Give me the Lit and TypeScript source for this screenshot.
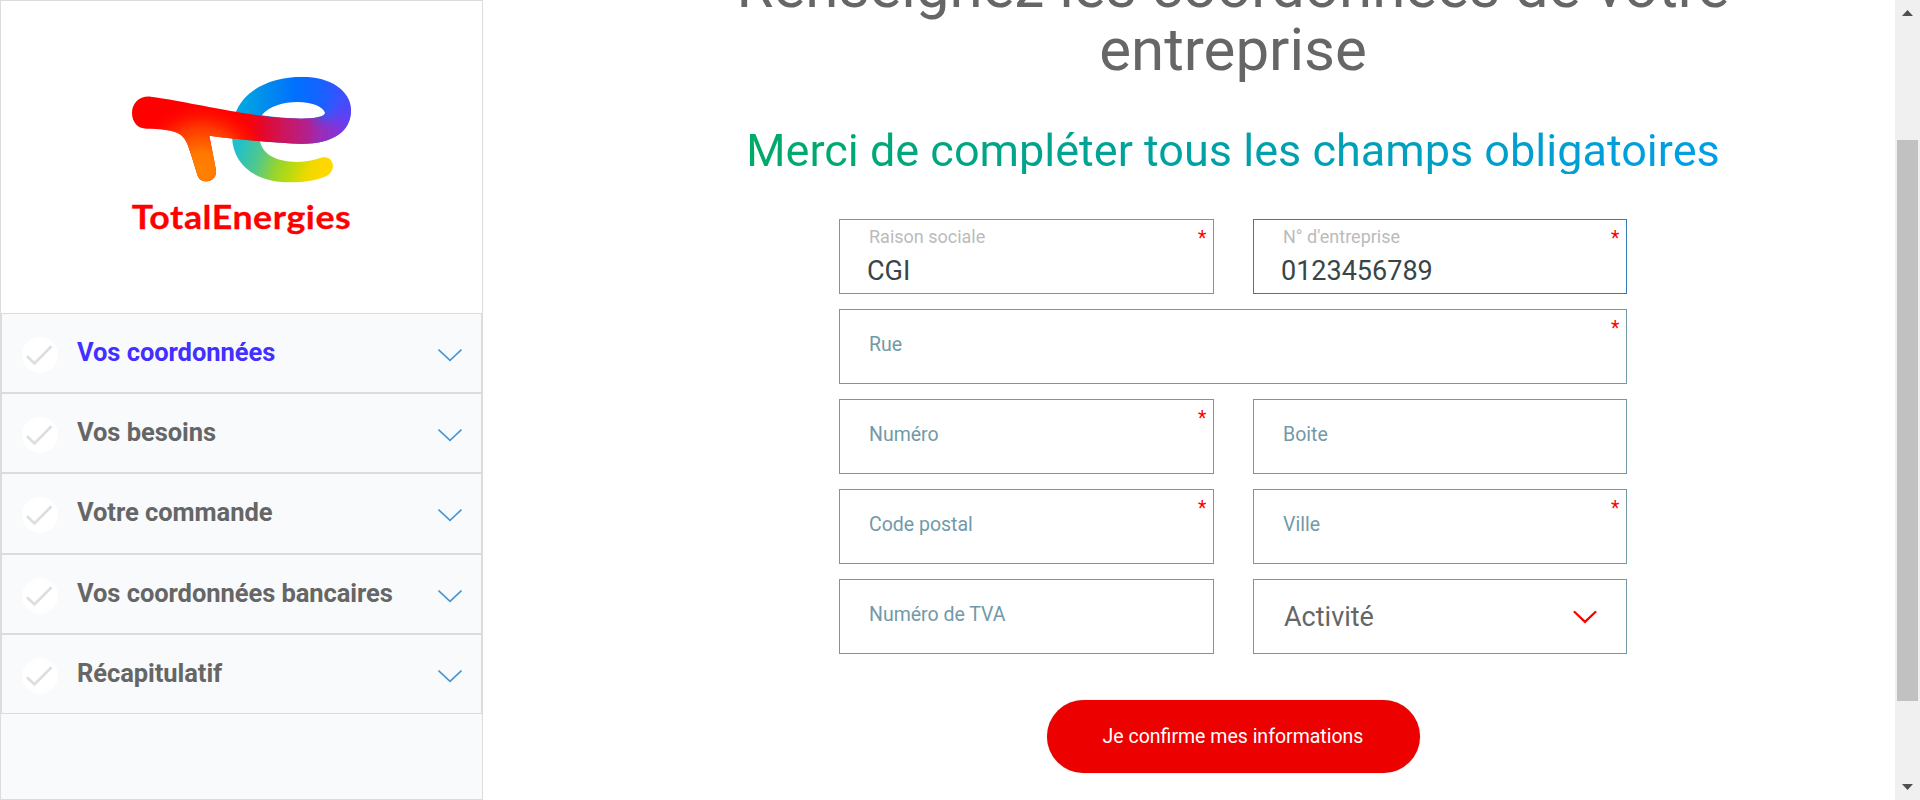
import { LitElement, html, css, svg } from "lit";
import { customElement, property } from "lit/decorators.js";
import { classMap } from "lit/directives/class-map.js";

@customElement("brand-logo")
class BrandLogo extends LitElement {
  static styles = css`
    :host { display: block; width: 260px; height: 190px; }
    svg { display: block; width: 260px; height: 190px; }
    text { font-family: Lato, "Open Sans", sans-serif; font-weight: 700; }
  `;
  render() {
    return svg`<svg viewBox="0 0 780 570">
      <defs>
        <linearGradient id="top" gradientUnits="userSpaceOnUse" x1="378" y1="0" x2="722" y2="0">
          <stop offset="0" stop-color="#00ace0"/><stop offset=".3" stop-color="#0088f0"/>
          <stop offset=".52" stop-color="#0070ff"/><stop offset=".72" stop-color="#1464ff"/>
          <stop offset="1" stop-color="#484cff"/>
        </linearGradient>
        <linearGradient id="bar" gradientUnits="userSpaceOnUse" x1="66" y1="0" x2="722" y2="0">
          <stop offset="0" stop-color="#f00"/><stop offset=".52" stop-color="#f00"/>
          <stop offset=".6" stop-color="#e4082c"/><stop offset=".7" stop-color="#cb1660"/>
          <stop offset=".8" stop-color="#b3208c"/><stop offset=".88" stop-color="#9a2bb4" stop-opacity="0"/>
        </linearGradient>
        <linearGradient id="low" gradientUnits="userSpaceOnUse" x1="385" y1="245" x2="640" y2="330">
          <stop offset="0" stop-color="#1fbfce"/><stop offset=".27" stop-color="#50c88c"/>
          <stop offset=".5" stop-color="#98d52c"/><stop offset=".66" stop-color="#bada10"/>
          <stop offset=".83" stop-color="#ecd900"/><stop offset="1" stop-color="#ffd800"/>
        </linearGradient>
        <radialGradient id="glow" gradientUnits="userSpaceOnUse" cx="275" cy="335" r="205">
          <stop offset="0" stop-color="#ff8200"/><stop offset=".28" stop-color="#ff7800"/>
          <stop offset=".65" stop-color="#ff4200" stop-opacity=".85"/><stop offset="1" stop-color="#ff1000" stop-opacity="0"/>
        </radialGradient>
        <filter id="soft" x="-50%" y="-50%" width="200%" height="200%"><feGaussianBlur stdDeviation="20"/></filter>
        <clipPath id="loop"><path clip-rule="evenodd" d="M376 160C402 91 480 50 578 50C662 50 722 93 723 148C724 213 671 252 572 251C520 249 480 246 440 242L376 200ZM455 166C478 138 520 126 562 126C610 126 640 142 645 158C646 170 616 176 574 176C530 175 490 171 455 166Z"/></clipPath>
      </defs>
      <path fill="url(#low)" d="M366 232C370 315 435 367 540 367C590 367 630 358 651 347C681 329 670 286 638 292C615 299 592 306 562 306C495 305 455 282 449 238Z"/>
      <g clip-path="url(#loop)">
        <rect x="360" y="40" width="380" height="230" fill="url(#top)"/>
        <g filter="url(#soft)">
          <ellipse cx="715" cy="165" rx="40" ry="40" fill="#5345f6"/>
          <ellipse cx="680" cy="220" rx="50" ry="45" fill="#7a35e0"/>
          <ellipse cx="625" cy="225" rx="48" ry="50" fill="#9c2bb8"/>
          <ellipse cx="560" cy="215" rx="50" ry="48" fill="#b8208a"/>
        </g>
      </g>
      <path fill="url(#bar)" d="M122 110C186 117 300 143 378 155C450 168 500 175 574 176C600 176 620 174 640 167L650 244Q615 252 572 251C475 248 382 238 298 227L318 331C322 367 271 377 262 344C250 305 241 275 232 252C220 218 192 207 110 206C81 206 66 184 66 159C66 130 88 107 122 110Z"/>
      <path fill="url(#glow)" d="M122 110C186 117 300 143 378 155C450 168 500 175 574 176L572 251C475 248 382 238 298 227L318 331C322 367 271 377 262 344C250 305 241 275 232 252C220 218 192 207 110 206C81 206 66 184 66 159C66 130 88 107 122 110Z"/>
      <text x="65" y="507" font-size="97" letter-spacing="1.5" textLength="659" lengthAdjust="spacingAndGlyphs" fill="#f00" stroke="#f00" stroke-width=".8" stroke-linejoin="round">TotalEnergies</text>
    </svg>`;
  }
}

@customElement("step-item")
class StepItem extends LitElement {
  @property() label = "";
  @property({ type: Boolean }) active = false;
  static styles = css`
    :host { display: block; }
    .row {
      box-sizing: border-box; height: 80.2px; border: 1px solid #dcdcdc;
      display: flex; align-items: center; padding: 4px 19px 0 20px;
    }
    .check { width: 36px; height: 36px; flex: none; }
    .name { flex: 1; margin: -6px 0 0 19px; font-size: 25.5px; font-weight: 700; letter-spacing: -0.06px; line-height: 30px; color: #666; white-space: nowrap; }
    .on { color: #432fff; }
    .arrow { width: 24px; height: 14px; flex: none; }
  `;
  render() {
    return html`<div class="row">
      <svg class="check" viewBox="0 0 36 36"><circle cx="18" cy="18" r="18" fill="#fff"/><path d="M5 19.2L12.5 26.4L29.5 9.3" fill="none" stroke="#dedede" stroke-width="2.8"/></svg>
      <span class=${classMap({ name: true, on: this.active })}>${this.label}</span>
      <svg class="arrow" viewBox="0 0 24 14"><path d="M.5 1.5L12 12.3L23.5 1.5" fill="none" stroke="#4796d2" stroke-width="1.6"/></svg>
    </div>`;
  }
}

@customElement("form-field")
class FormField extends LitElement {
  @property() label = "";
  @property() value = "";
  @property({ type: Boolean }) required = false;
  @property({ type: Boolean }) focused = false;
  @property({ type: Boolean }) select = false;
  static styles = css`
    :host { display: block; }
    .box {
      box-sizing: border-box; height: 75px; border: 1px solid #7398a6; background: #fff;
      position: relative; padding: 0 29px 0 29px; color: #7299a8;
    }
    .focus { border-color: #337ab7; }
    .label { display: block; font-size: 19.5px; line-height: 24px; padding-top: 23px; }
    .small { font-size: 18px; line-height: 22px; padding-top: 6px; color: #bbb; }
    .value { display: block; font-size: 27px; line-height: 32px; margin: 7px 0 0 -2px; color: #374649; }
    .star { position: absolute; top: 7px; right: 6.5px; font-size: 19.5px; line-height: 24px; color: #f00; }
    .choice { display: flex; align-items: center; justify-content: space-between; height: 73px; font-size: 27px; color: #666; padding-left: 1px; }
    .arrow { width: 24px; height: 14px; }
  `;
  render() {
    const box = classMap({ box: true, focus: this.focused });
    if (this.select) {
      return html`<div class=${box}><div class="choice"><span>${this.label}</span>
        <svg class="arrow" viewBox="0 0 24 14"><path d="M1.6 2L12 11.8L22.4 2" fill="none" stroke="#f00" stroke-width="2.3" stroke-linecap="round"/></svg></div></div>`;
    }
    return html`<div class=${box}>
      <span class=${classMap({ label: true, small: !!this.value })}>${this.label}</span>
      ${this.value ? html`<span class="value">${this.value}</span>` : ""}
      ${this.required ? html`<span class="star">*</span>` : ""}
    </div>`;
  }
}

@customElement("app-root")
class AppRoot extends LitElement {
  static styles = css`
    :host { display: flex; width: 1920px; height: 800px; overflow: hidden; background: #fff; font-family: Roboto, "Liberation Sans", sans-serif; }
    .side { box-sizing: border-box; width: 483px; height: 800px; border: 1px solid #dcdcdc; background: #f8fafc; flex: none; }
    .brand { box-sizing: border-box; height: 312px; background: #fff; padding: 59px 0 0 109px; }
    .main { flex: 1; padding-left: 88px; display: flex; flex-direction: column; align-items: center; }
    h1 { margin: -45px 0 0; width: 1100px; font-size: 60px; line-height: 63px; font-weight: 400; color: #666; text-align: center; flex: none; }
    h2 { margin: 48px 0 0; padding-bottom: 1px; font-size: 45px; line-height: 44px; font-weight: 400; flex: none; white-space: nowrap;
      background: linear-gradient(100deg, #00aa66, #00a0a8 50%, #009ee8); -webkit-background-clip: text; background-clip: text; color: transparent; }
    .form { margin-top: 45px; width: 788px; display: grid; grid-template-columns: 375px 374px; gap: 15px 39px; }
    .wide { grid-column: 1 / 3; }
    .confirm { margin-top: 46px; width: 373px; height: 73px; border: 0; border-radius: 37px; background: #ed0000; color: #fff; font: 400 19.5px Roboto, sans-serif; padding: 0; flex: none; box-shadow: 0 0 1px rgba(0,0,0,.4); }
    .scroll { width: 25px; height: 800px; background: #f0f0f0; flex: none; display: flex; flex-direction: column; align-items: center; }
    .up { width: 11px; height: 6px; margin-top: 10px; background: #505050; clip-path: polygon(50% 0, 100% 100%, 0 100%); }
    .thumb { width: 21px; height: 561px; margin-top: 124px; background: #c1c1c1; }
    .down { width: 11px; height: 6px; margin-top: 83px; background: #505050; clip-path: polygon(0 0, 100% 0, 50% 100%); }
  `;
  steps = ["Vos coordonnées", "Vos besoins", "Votre commande", "Vos coordonnées bancaires", "Récapitulatif"];
  render() {
    return html`
      <aside class="side">
        <div class="brand"><brand-logo></brand-logo></div>
        ${this.steps.map((s, i) => html`<step-item .label=${s} .active=${i === 0}></step-item>`)}
      </aside>
      <main class="main">
        <h1>Renseignez les coordonnées de votre entreprise</h1>
        <h2>Merci de compléter tous les champs obligatoires</h2>
        <div class="form">
          <form-field label="Raison sociale" value="CGI" required></form-field>
          <form-field label="N° d'entreprise" value="0123456789" required focused></form-field>
          <form-field class="wide" label="Rue" required></form-field>
          <form-field label="Numéro" required></form-field>
          <form-field label="Boite"></form-field>
          <form-field label="Code postal" required></form-field>
          <form-field label="Ville" required></form-field>
          <form-field label="Numéro de TVA"></form-field>
          <form-field label="Activité" select></form-field>
        </div>
        <button class="confirm">Je confirme mes informations</button>
      </main>
      <div class="scroll"><div class="up"></div><div class="thumb"></div><div class="down"></div></div>
    `;
  }
}
